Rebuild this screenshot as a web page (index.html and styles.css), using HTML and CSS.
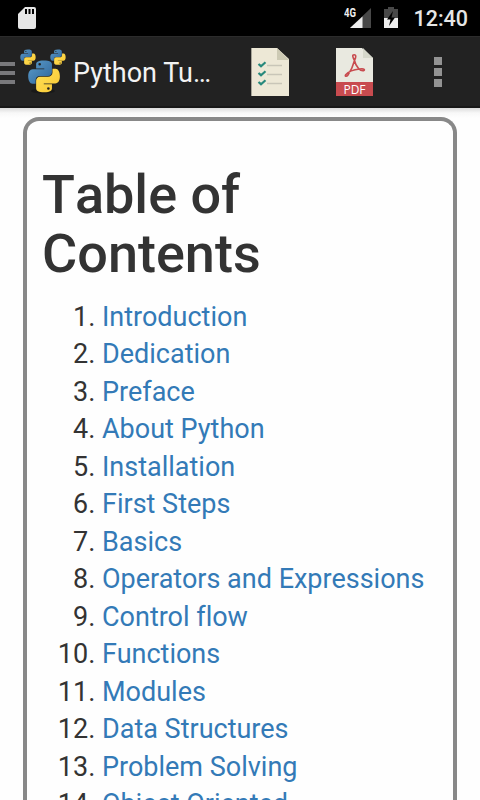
FILE: index.html
```
<!DOCTYPE html>
<html lang="en">

<head>
    <meta charset="UTF-8">
    <meta name="viewport" content="width=device-width, initial-scale=1.0">
    <title>Python Tutorial</title>
    <link rel="stylesheet" href="styles.css">
</head>

<body>
    <div class="statusbar">
        <svg class="sdcard" width="18" height="22" viewBox="0 0 18 22">
            <path fill="#e6e6e6" d="M7 0h9q2 0 2 2v18q0 2-2 2H2q-2 0-2-2V7z" />
            <path stroke="#000" stroke-width="2" d="M8 2v5M11.5 2v5M15 2v5" />
        </svg>
        <svg class="signal" width="28" height="22" viewBox="0 0 28 22">
            <path fill="#484848" d="M27 1v20H6z" />
            <path fill="#eee" d="M18.500 9.500V21H6z" />
            <path fill="#000" d="M0 0h13v11H0z" />
            <text x="0" y="9.500" class="network" textLength="12" lengthAdjust="spacingAndGlyphs">4G</text>
        </svg>
        <svg class="battery" width="14" height="22" viewBox="0 0 14 22">
            <path fill="#484848" d="M4 0h6v2h4v9H0V2h4z" />
            <path fill="#eee" d="M0 11h14v10H0z" />
            <path fill="#000" d="M9 4L3 12.500h3.500L5 19l6-8.500H7.500z" />
        </svg>
        <span class="clock">12:40</span>
    </div>
    <div class="actionbar">
        <div class="drawer"><i></i><i></i><i></i></div>
        <svg class="logo" width="46" height="46" viewBox="0 0 46 46">
            <defs>
                <linearGradient id="blue" x1="0" y1="0" x2="1" y2="1">
                    <stop offset="0" stop-color="#5c9dcc" />
                    <stop offset="1" stop-color="#2d6398" />
                </linearGradient>
                <linearGradient id="yellow" x1="1" y1="1" x2="0" y2="0">
                    <stop offset="0" stop-color="#ffe05a" />
                    <stop offset="1" stop-color="#f8c832" />
                </linearGradient>
                <g id="python">
                    <path fill="url(#blue)" fill-rule="evenodd" d="M12 0C7 0 6 1.300 6 3v3h6.200v.6H3.500C1.200 6.600 0 8.800 0 12s1.300 5.700 3.300 5.700h2.300V14.900c0-2 1.500-3.200 3.400-3.200h6c1.700 0 3-1.400 3-3V3c0-2-2-3-6-3zM8.700 1.800a1 1 0 1 1 0 2 1 1 0 1 1 0-2z" />
                    <path transform="rotate(180 12 12)" fill="url(#yellow)" fill-rule="evenodd" d="M12 0C7 0 6 1.300 6 3v3h6.200v.6H3.500C1.200 6.600 0 8.800 0 12s1.300 5.700 3.300 5.700h2.300V14.900c0-2 1.500-3.200 3.400-3.200h6c1.700 0 3-1.400 3-3V3c0-2-2-3-6-3zM8.700 1.800a1 1 0 1 1 0 2 1 1 0 1 1 0-2z" />
                </g>
            </defs>
            <ellipse cx="23" cy="42" rx="12" ry="2.500" fill="#191919" />
            <use href="#python" transform="translate(.3 .5) scale(.64)" />
            <use href="#python" transform="translate(30.300 .5) scale(.64)" />
            <use href="#python" transform="translate(8.200 11.500) scale(1.320)" />
        </svg>
        <span class="title">Python Tu…</span>
        <svg class="checklist" width="38" height="48" viewBox="0 0 38 48">
            <path fill="#ede8d6" d="M0 0h26l12 11v37H0z" />
            <path fill="#a6a498" d="M0 0h1v48H0z" />
            <path fill="#cdcab4" d="M26 0l12 12H26z" />
            <path fill="none" stroke="#27897c" stroke-width="2.200" d="M7.500 16l2.500 2.200 4.500-4M7.500 25l2.500 2.200 4.500-4M7.500 34l2.500 2.200 4.500-4" />
            <path stroke="#c9c6b8" stroke-width="1.300" d="M16 17.500h15M16 26.500h15M16 35.500h15" />
        </svg>
        <svg class="pdf" width="37" height="48" viewBox="0 0 37 48">
            <path fill="#e9e9e0" d="M0 0h26l11 10v24H0z" />
            <path fill="#d6d8cb" d="M27 0l10 10H27z" />
            <path fill="#c84b4f" d="M0 34h37v14H0z" />
            <path fill="none" stroke="#c84b4f" stroke-width="1.600" stroke-linejoin="round" d="M18.500 12.500C16.500 9 16 6.700 18.200 6.700s1.800 2.800.3 5.800c-1.300 5-3.800 10.500-6.500 14.500-1.500 2-3.500 1.500-2.300-.2 2.300-2.800 8.300-5.300 14-5.800 5-.8 5.500 1.200 3.800 1.700-3 .5-7.500-3.200-9-10.200" />
            <text x="18.500" y="45.500" class="pdf-label">PDF</text>
        </svg>
        <div class="overflow"><i></i><i></i><i></i></div>
    </div>
    <div class="page">
        <div class="content">
            <h1>Table of Contents</h1>
            <ol>
                <li><a href="#!">Introduction</a></li>
                <li><a href="#!">Dedication</a></li>
                <li><a href="#!">Preface</a></li>
                <li><a href="#!">About Python</a></li>
                <li><a href="#!">Installation</a></li>
                <li><a href="#!">First Steps</a></li>
                <li><a href="#!">Basics</a></li>
                <li><a href="#!">Operators and Expressions</a></li>
                <li><a href="#!">Control flow</a></li>
                <li><a href="#!">Functions</a></li>
                <li><a href="#!">Modules</a></li>
                <li><a href="#!">Data Structures</a></li>
                <li><a href="#!">Problem Solving</a></li>
                <li><a href="#!">Object Oriented</a></li>
            </ol>
        </div>
    </div>
</body>

</html>
```
FILE: styles.css
```
* {
    box-sizing: border-box;
}

body {
    margin: 0;
    height: 100vh;
    overflow: hidden;
    display: flex;
    flex-direction: column;
    background-color: white;
    font-family: Roboto, sans-serif;
    font-variant-ligatures: none;
}

svg {
    flex: none;
}

.statusbar {
    flex: none;
    height: 36px;
    display: flex;
    align-items: flex-start;
    padding: 7px 12px 0 18px;
    background-color: black;
}

.signal {
    margin-left: auto;
    margin-right: 12px;
}

.network {
    fill: #eee;
    font-size: 12px;
    font-weight: bold;
}

.battery {
    margin-right: 15px;
}

.clock {
    color: #e6e6e6;
    font-size: 21.500px;
    font-weight: 500;
    line-height: 24px;
}

.actionbar {
    flex: none;
    height: 72px;
    display: flex;
    align-items: center;
    background-color: #222;
    border-top: 1px solid #2c2c2c;
    border-bottom: 2px solid #181818;
}

.drawer {
    width: 15px;
    display: flex;
    flex-direction: column;
    gap: 5px;
    margin-top: 2px;
    margin-right: 5px;
}

.drawer i {
    height: 4px;
    background-color: #79797c;
}

.title {
    width: 142px;
    margin-left: 7px;
    margin-right: 36px;
    padding-top: 2px;
    color: #f3f3f3;
    font-size: 27px;
    white-space: nowrap;
}

.pdf {
    margin-left: 47px;
}

.pdf-label {
    fill: white;
    font-size: 12px;
    font-family: 'Open Sans', sans-serif;
    text-anchor: middle;
}

.overflow {
    display: flex;
    flex-direction: column;
    gap: 3px;
    margin-left: 61px;
}

.overflow i {
    width: 8px;
    height: 8px;
    background-color: #939393;
}

.page {
    flex: 1;
    min-height: 0;
    overflow: hidden;
    padding: 9px 23px 0 22.500px;
    background: linear-gradient(#dcdcdc, #f8f8f8 5px, #fefefe 10px);
}

.content {
    padding: 44px 15px 0 15.500px;
    background-color: #fefefe;
    border: 4px solid #888;
    border-bottom: 0;
    border-radius: 16px 16px 0 0;
}

h1 {
    margin: 0 0 15px;
    color: #333;
    font-size: 54px;
    font-weight: 500;
    font-kerning: none;
    line-height: 59.400px;
}

ol {
    margin: 0;
    padding-left: 60px;
    color: #333;
    font-size: 27px;
    line-height: 37.500px;
}

a {
    color: #337ab7;
    text-decoration: none;
    white-space: nowrap;
}
```
